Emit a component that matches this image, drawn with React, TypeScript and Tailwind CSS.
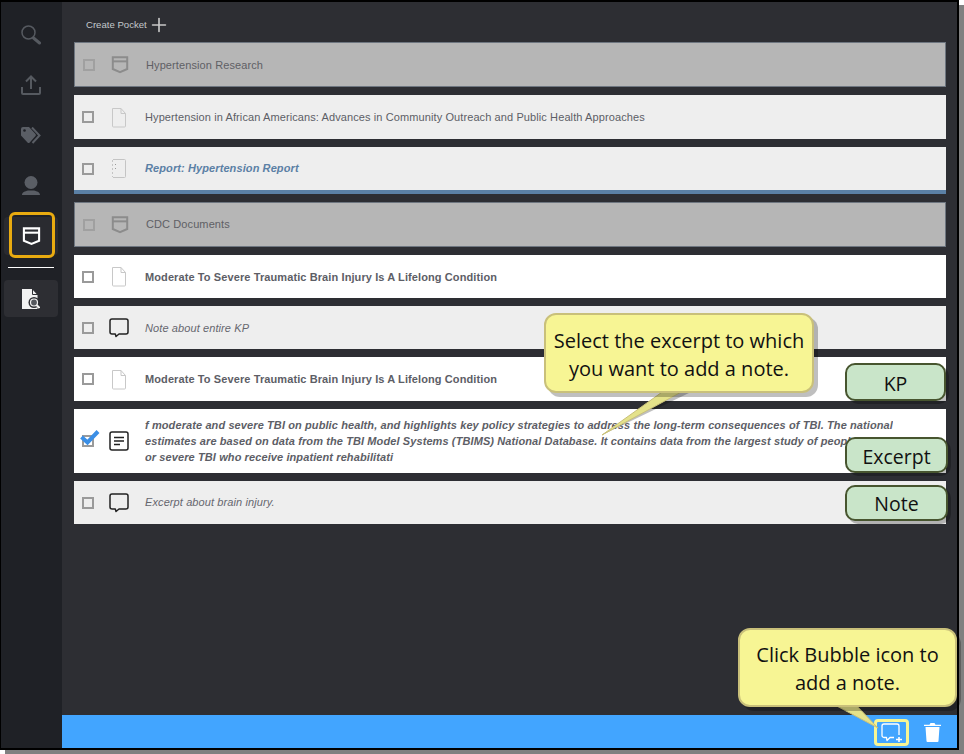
import React from 'react';
import { Plus } from 'lucide-react';

const PocketIcon = ({ className = '' }: { className?: string }) => (
  <svg viewBox="0 0 20 20" className={className} fill="none" stroke="currentColor" strokeWidth="2.2">
    <path d="M2 2h16v13l-8 3.400L2 15z" />
    <path d="M2 6.500h16" />
  </svg>
);

const DocIcon = () => (
  <svg width="16" height="21" viewBox="0 0 16 21" fill="none" stroke="#c8c8c8" strokeWidth="1">
    <path d="M1.500 1.500h8.500l4.500 5v12.500a1 1 0 0 1-1 1h-11a1 1 0 0 1-1-1z" />
    <path d="M10 1.500v5h4.500" />
  </svg>
);

const ReportIcon = () => (
  <svg width="16" height="21" viewBox="0 0 16 21" fill="none" stroke="#c4c4c4" strokeWidth="1">
    <path d="M2 1.500h11.500a1 1 0 0 1 1 1v16a1 1 0 0 1-1 1H2" />
    <path d="M1.500 2v17" strokeDasharray="2 2" />
    <path d="M4.500 6v1M4.500 10v1" stroke="#999" />
  </svg>
);

const BubbleIcon = () => (
  <svg width="20" height="20" viewBox="0 0 20 20" fill="none" stroke="#222" strokeWidth="1.500">
    <path d="M3 1h14a2 2 0 0 1 2 2v11a2 2 0 0 1-2 2H10l-3 2.500-.7-2.500H3a2 2 0 0 1-2-2V3a2 2 0 0 1 2-2z" strokeLinejoin="round" />
  </svg>
);

const ExcerptIcon = () => (
  <svg width="20" height="20" viewBox="0 0 20 20" fill="none" stroke="#222" strokeWidth="1.500">
    <rect x="1" y="1" width="18" height="18" rx="2" />
    <path d="M5 6.500h10M5 10h10M5 13.500h6" />
  </svg>
);

const SearchIcon = () => (
  <svg width="20" height="20" viewBox="0 0 20 20" fill="none" stroke="#565a60">
    <circle cx="7.500" cy="7.500" r="6.500" strokeWidth="1.500" />
    <path d="M12.500 13l6 5" strokeWidth="3" strokeLinecap="round" />
  </svg>
);

const UploadIcon = () => (
  <svg width="20" height="20" viewBox="0 0 20 20" fill="none" stroke="#565a60" strokeWidth="2">
    <path d="M10 14V2M5 6.500L10 1.500l5 5" />
    <path d="M1 12v6a1 1 0 0 0 1 1h16a1 1 0 0 0 1-1v-6" />
  </svg>
);

const TagIcon = () => (
  <svg width="20" height="17" viewBox="0 0 20 17">
    <path d="M0 2a2 2 0 0 1 2-2h6l6.500 7a1.500 1.500 0 0 1 0 2l-5.800 6.500a1.500 1.500 0 0 1-2.200 0L0 8.500z" fill="#5a5e65" />
    <path d="M11 0.500l7.500 8-7 7.500" fill="none" stroke="#5a5e65" strokeWidth="2" />
    <circle cx="3.500" cy="3.500" r="1.300" fill="#1f2126" />
  </svg>
);

const UserIcon = () => (
  <svg width="18" height="19" viewBox="0 0 18 19" fill="#5a5e65">
    <circle cx="9" cy="6.500" r="6.500" />
    <path d="M0 19c0-3 3-3.500 6-4.500h6c3 1 6 1.500 6 4.500z" />
  </svg>
);

const PreviewIcon = () => (
  <svg width="18" height="20" viewBox="0 0 18 20">
    <path d="M0 0h10l5.500 6v14H0z" fill="#f2f2f2" />
    <path d="M10.500 0v5.500H16" fill="none" stroke="#2d2e33" strokeWidth="1" />
    <circle cx="12" cy="13.500" r="5.500" fill="#2d2e33" />
    <circle cx="12" cy="13.500" r="3.500" fill="#55585e" stroke="#f2f2f2" strokeWidth="1.200" />
    <path d="M14.500 16l3 3" stroke="#f2f2f2" strokeWidth="2" />
  </svg>
);

type Row = {
  icon: React.ReactNode;
  text: React.ReactNode;
  box: string;
  textClass: string;
  checked?: boolean;
  dim?: boolean;
};

const pocket = <PocketIcon className="w-[18px] h-[19px] text-[#8c8c8c]" />;
const pocketBox = 'h-[45px] bg-[#b6b6b6] border border-[#6e7680]';
const white = 'bg-white';
const grey = 'bg-[#eeeeee]';

const rows: Row[] = [
  { icon: pocket, text: 'Hypertension Research', box: pocketBox, textClass: 'pt-px text-[#5f6065]', dim: true },
  { icon: <DocIcon />, text: 'Hypertension in African Americans: Advances in Community Outreach and Public Health Approaches', box: `h-[44px] ${grey}`, textClass: 'text-[#5d5e66]' },
  { icon: <ReportIcon />, text: 'Report: Hypertension Report', box: `h-[47px] ${grey} border-b-4 border-[#5b80a5]`, textClass: 'italic font-bold text-[#5b80a5]' },
  { icon: pocket, text: 'CDC Documents', box: pocketBox, textClass: 'text-[#5f6065]', dim: true },
  { icon: <DocIcon />, text: 'Moderate To Severe Traumatic Brain Injury Is A Lifelong Condition', box: `h-[43px] ${white}`, textClass: 'pt-[2px] font-bold text-[#5d5e66]' },
  { icon: <BubbleIcon />, text: 'Note about entire KP', box: `h-[43px] ${grey}`, textClass: 'pt-[2px] italic text-[#66676e]' },
  { icon: <DocIcon />, text: 'Moderate To Severe Traumatic Brain Injury Is A Lifelong Condition', box: `h-[44px] ${white}`, textClass: 'font-bold text-[#5d5e66]' },
  {
    icon: <ExcerptIcon />,
    text: (
      <>
        f moderate and severe TBI on public health, and highlights key policy strategies to address the long-term consequences of TBI. The national
        <br />
        estimates are based on data from the TBI Model Systems (TBIMS) National Database. It contains data from the largest study of people
        <br />
        or severe TBI who receive inpatient rehabilitati
      </>
    ),
    box: `h-[64px] ${white}`,
    textClass: 'italic font-bold text-[#5d5e66] leading-4 whitespace-nowrap overflow-hidden',
    checked: true,
  },
  { icon: <BubbleIcon />, text: 'Excerpt about brain injury.', box: `h-[43px] ${grey}`, textClass: 'italic text-[#66676e]' },
];

const Callout = ({ className, children }: { className: string; children: React.ReactNode }) => (
  <div className={`absolute flex items-center justify-center text-center rounded-[12px] border-[2px] border-[#c9c07a] bg-[#f7f594] text-[#111] shadow-[4px_4px_0_rgba(0,0,0,0.25)] font-['Open_Sans',sans-serif] text-[20px] leading-[28px] ${className}`}>
    {children}
  </div>
);

const Tag = ({ className, children }: { className: string; children: React.ReactNode }) => (
  <div className={`absolute flex items-center justify-center rounded-[10px] border-[2px] border-[#47552f] bg-[#c9e5c9] text-[#111] shadow-[3px_3px_0_rgba(0,0,0,0.25)] font-['Open_Sans',sans-serif] text-[19.500px] ${className}`}>
    {children}
  </div>
);

const NavItem = ({ children }: { children: React.ReactNode }) => (
  <div className="h-[50px] pr-[2px] flex items-center justify-center">{children}</div>
);

export default function App() {
  return (
    <div className="relative w-[964px] h-[754px] bg-white font-['Liberation_Sans',sans-serif] overflow-hidden">
      <div className="relative w-[959px] h-[750px] flex border-l border-t-2 border-r-2 border-b-2 border-black bg-[#2d2e33] shadow-[5px_5px_0_#808080]">
        {/* Sidebar */}
        <aside className="w-[61px] shrink-0 bg-[#1f2126] flex flex-col pt-[8px]">
          <NavItem><SearchIcon /></NavItem>
          <NavItem><UploadIcon /></NavItem>
          <NavItem><TagIcon /></NavItem>
          <NavItem><UserIcon /></NavItem>
          <div className="relative h-[38px] w-[54px] ml-[3px] mt-[7px] rounded-[4px] bg-[#2a2b30] flex items-center justify-center">
            <PocketIcon className="w-[19px] h-[20px] text-white" />
            <div className="absolute left-[5px] -top-[5px] w-[46px] h-[46px] rounded-[6px] border-[3px] border-[#e9ab10]" />
          </div>
          <div className="h-px w-[46px] bg-white ml-[7px] mt-[12px]" />
          <div className="h-[37px] w-[54px] ml-[3px] mt-[12px] rounded-[4px] bg-[#2d2e33] flex items-center justify-center">
            <PreviewIcon />
          </div>
        </aside>

        {/* Main */}
        <main className="flex-1 flex flex-col min-w-0">
          <div className="flex-1 pl-[12px] pr-[11px]">
            <div className="h-[40px] flex items-center pl-[12px] pt-[6px] gap-[1px] text-[9.600px] text-[#c4c8cc]">
              Create Pocket
              <Plus size={22} strokeWidth={1.800} className="text-[#c8c8c8]" />
            </div>
            <div className="flex flex-col gap-2">
              {rows.map((r, i) => (
                <div key={i} className={`flex items-center shrink-0 ${r.box}`}>
                  <div className="relative w-[28px] flex justify-center">
                    <span className={`block w-3 h-3 border-2 ${r.dim ? 'border-[#a0a0a0]' : 'border-[#9a9a9a]'}`} />
                    {r.checked && (
                      <svg width="20" height="17" viewBox="0 0 20 17" className="absolute left-[6px] -top-[6px]">
                        <path d="M1.500 8l6 5.500L18 2.500" fill="none" stroke="#3b8fe6" strokeWidth="4" />
                      </svg>
                    )}
                  </div>
                  <div className="w-[34px] flex justify-center">{r.icon}</div>
                  <div className={`ml-[9px] text-[11px] tracking-[0.1px] ${r.textClass}`}>{r.text}</div>
                </div>
              ))}
            </div>
          </div>
          {/* Bottom bar */}
          <div className="h-[33px] bg-[#42a5ff] flex items-center justify-end pr-[16px] gap-[15px]">
            <div className="w-[35px] h-[27px] mt-[2px] rounded-[4px] border-[3px] border-[#f7f594] flex items-center justify-center">
              <svg width="22" height="20" viewBox="0 0 22 20" fill="none" stroke="#fff" strokeWidth="1.300">
                <path d="M3 1h13a2 2 0 0 1 2 2v9M13 14.500H9l-3 3-.5-3H3a2 2 0 0 1-2-2V3a2 2 0 0 1 2-2" strokeLinejoin="round" />
                <path d="M15 16.500h6M18 14v5" strokeWidth="1.600" />
              </svg>
            </div>
            <svg width="17" height="19" viewBox="0 0 17 19" fill="#fff" className="mt-[2px]">
              <path d="M0 1.700h5.500L6.500 0h4l1 1.700H17V3H0z" />
              <path d="M1.500 4h14l-1 14a1 1 0 0 1-1 1h-10a1 1 0 0 1-1-1z" />
            </svg>
          </div>
        </main>

        {/* Tutorial overlays */}
        <Tag className="left-[844px] top-[361px] w-[101px] h-[38px] pt-[4px]">KP</Tag>
        <Tag className="left-[844px] top-[435px] w-[103px] h-[36px] pt-[4px]">Excerpt</Tag>
        <Tag className="left-[844px] top-[483px] w-[103px] h-[36px] pt-[2px]">Note</Tag>

        <svg width="90" height="50" viewBox="0 0 90 50" className="absolute left-[600px] top-[388px] z-10">
          <path d="M1 45L64 2h26z" fill="rgba(0,0,0,0.25)" />
          <path d="M1 45L64 0h20z" fill="#e4e28a" stroke="#c9c07a" strokeWidth="1" />
        </svg>
        <Callout className="z-10 left-[543px] top-[311px] w-[270px] h-[80px] pt-[4px]">
          <span>Select the excerpt to which<br />you want to add a note.</span>
        </Callout>

        <svg width="50" height="30" viewBox="0 0 50 30" className="absolute left-[830px] top-[702px] z-10">
          <path d="M2 0h22l23 24z" fill="#e4e28a" stroke="#c9c07a" strokeWidth="1" />
        </svg>
        <Callout className="z-10 left-[737px] top-[626px] w-[219px] h-[79px] pt-[2px]">
          <span>Click Bubble icon to<br />add a note.</span>
        </Callout>
      </div>
    </div>
  );
}
